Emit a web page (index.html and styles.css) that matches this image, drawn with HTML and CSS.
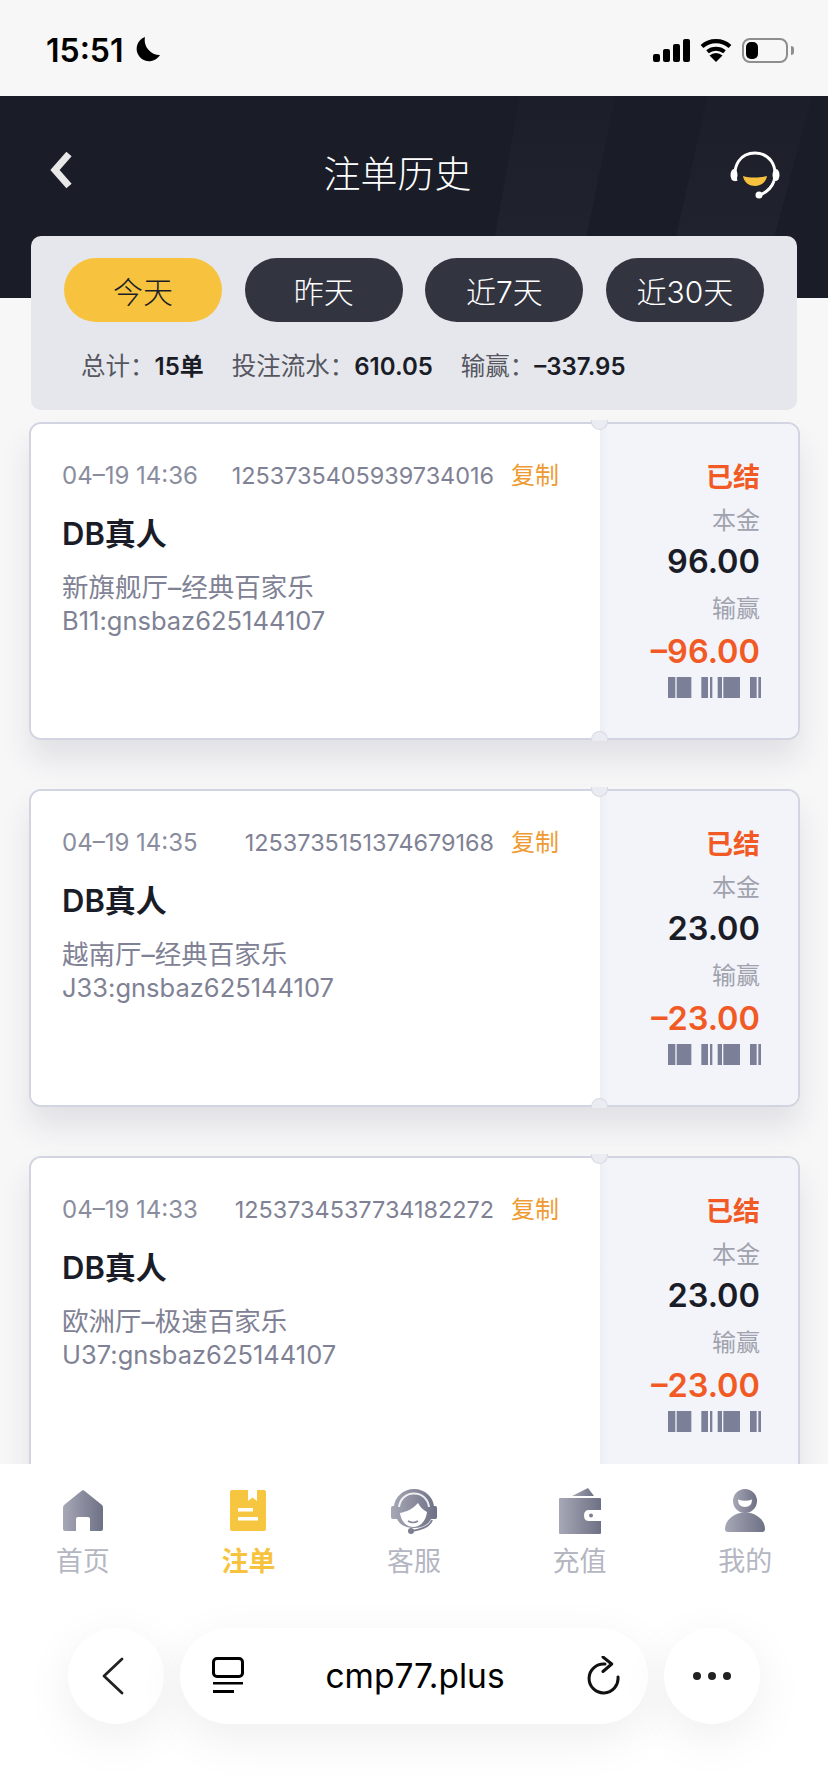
FILE: index.html
```html
<!DOCTYPE html>
<html lang="zh-CN">
<head>
    <meta charset="UTF-8">
    <meta name="viewport" content="width=device-width, initial-scale=1.0">
    <title>注单历史</title>
    <link rel="stylesheet" href="styles.css">
</head>
<body>
    <div class="page">
        <!-- Status bar -->
        <div class="status-bar">
            <div class="status-left">
                <span class="clock">15:51</span>
                <svg class="moon" width="25" height="25" viewBox="0 0 25 25"><path d="M10 0A12.5 12.500 0 1 0 25 18A15 15 0 0 1 10 0Z" fill="#000"/></svg>
            </div>
            <div class="status-right">
                <svg width="37" height="23" viewBox="0 0 37 23"><rect x="0" y="15" width="7" height="8" rx="2"/><rect x="10" y="10" width="7" height="13" rx="2"/><rect x="20" y="5" width="7" height="18" rx="2"/><rect x="30" y="0" width="7" height="23" rx="2"/></svg>
                <svg width="32" height="24" viewBox="0 0 32 24"><path d="M2 8.500A21 21 0 0 1 30 8.500" fill="none" stroke="#000" stroke-width="4.200"/><path d="M7.500 13.800A13.500 13.500 0 0 1 24.500 13.800" fill="none" stroke="#000" stroke-width="4"/><path d="M16 24L9.500 17.500A9.500 9.500 0 0 1 22.500 17.500Z" fill="#000"/></svg>
                <div class="battery"><div class="battery-fill"></div></div>
            </div>
        </div>

        <div class="content">
            <!-- Dark header -->
            <header class="top-bar">
                <svg class="top-stripes" width="828" height="202" viewBox="0 0 828 202">
                    <defs>
                        <linearGradient id="stripeGrad" x1="0" y1="0" x2="0" y2="1">
                            <stop offset="0" stop-color="#1c1f29"/>
                            <stop offset="1" stop-color="#22252f"/>
                        </linearGradient>
                    </defs>
                    <polygon points="520,0 615,0 574,202 484,202" fill="url(#stripeGrad)"/>
                    <polygon points="708,0 812,0 758,202 662,202" fill="url(#stripeGrad)"/>
                </svg>
                <svg class="top-icon" width="24" height="38" viewBox="0 0 24 38"><path d="M19 3L5 19L19 35" fill="none" stroke="#e8e8e8" stroke-width="7"/></svg>
                <h1 class="top-title">注单历史</h1>
                <svg class="top-icon" width="52" height="48" viewBox="0 0 52 48">
                    <path d="M7 30C3 14 12 2 26 2C40 2 49 14 45 30" fill="none" stroke="#fff" stroke-width="3"/>
                    <ellipse cx="5" cy="24" rx="3.500" ry="6" fill="#fff"/>
                    <ellipse cx="47" cy="24" rx="3.500" ry="6" fill="#fff"/>
                    <path d="M45 30C43 36 38 41 31 44" fill="none" stroke="#fff" stroke-width="3"/>
                    <circle cx="30" cy="44" r="3.500" fill="#fff"/>
                    <path d="M14 25C20 27 32 27 38 25C37 32 31 35 26 35C21 35 15 32 14 25Z" fill="#f6c23e"/>
                </svg>
            </header>

            <!-- Date filter -->
            <section class="filter-panel">
                <div class="filter-row">
                    <div class="pill pill-active">今天</div>
                    <div class="pill">昨天</div>
                    <div class="pill">近7天</div>
                    <div class="pill">近30天</div>
                </div>
                <div class="totals">
                    <span>总计：<b>15单</b></span>
                    <span>投注流水：<b>610.05</b></span>
                    <span>输赢：<b>–337.95</b></span>
                </div>
            </section>

            <!-- Bet records -->
            <section class="card-list">
                <article class="card">
                    <div class="card-main">
                        <div class="card-meta">
                            <span class="card-date">04–19 14:36</span>
                            <span class="card-order">1253735405939734016</span>
                            <span class="card-copy">复制</span>
                        </div>
                        <div class="card-name">DB真人</div>
                        <div class="card-game">新旗舰厅–经典百家乐</div>
                        <div class="card-user">B11:gnsbaz625144107</div>
                    </div>
                    <div class="card-side">
                        <div class="side-status">已结</div>
                        <div class="side-label">本金</div>
                        <div class="side-amount">96.00</div>
                        <div class="side-label">输赢</div>
                        <div class="side-result">–96.00</div>
                        <svg class="barcode" width="93" height="21" viewBox="0 0 279 63"><use href="#barcode-bars"/></svg>
                    </div>
                    <i class="notch notch-top"></i>
                    <i class="notch notch-bottom"></i>
                </article>

                <article class="card">
                    <div class="card-main">
                        <div class="card-meta">
                            <span class="card-date">04–19 14:35</span>
                            <span class="card-order">1253735151374679168</span>
                            <span class="card-copy">复制</span>
                        </div>
                        <div class="card-name">DB真人</div>
                        <div class="card-game">越南厅–经典百家乐</div>
                        <div class="card-user">J33:gnsbaz625144107</div>
                    </div>
                    <div class="card-side">
                        <div class="side-status">已结</div>
                        <div class="side-label">本金</div>
                        <div class="side-amount">23.00</div>
                        <div class="side-label">输赢</div>
                        <div class="side-result">–23.00</div>
                        <svg class="barcode" width="93" height="21" viewBox="0 0 279 63"><use href="#barcode-bars"/></svg>
                    </div>
                    <i class="notch notch-top"></i>
                    <i class="notch notch-bottom"></i>
                </article>

                <article class="card">
                    <div class="card-main">
                        <div class="card-meta">
                            <span class="card-date">04–19 14:33</span>
                            <span class="card-order">1253734537734182272</span>
                            <span class="card-copy">复制</span>
                        </div>
                        <div class="card-name">DB真人</div>
                        <div class="card-game">欧洲厅–极速百家乐</div>
                        <div class="card-user">U37:gnsbaz625144107</div>
                    </div>
                    <div class="card-side">
                        <div class="side-status">已结</div>
                        <div class="side-label">本金</div>
                        <div class="side-amount">23.00</div>
                        <div class="side-label">输赢</div>
                        <div class="side-result">–23.00</div>
                        <svg class="barcode" width="93" height="21" viewBox="0 0 279 63"><use href="#barcode-bars"/></svg>
                    </div>
                    <i class="notch notch-top"></i>
                    <i class="notch notch-bottom"></i>
                </article>
            </section>
        </div>

        <!-- Tab bar -->
        <nav class="tab-bar">
            <div class="tab">
                <svg width="40" height="42" viewBox="0 0 40 42"><path d="M19 0.500Q20 0 21 0.500L39 15Q40 16 40 18V39Q40 41 38 41H27V29Q27 27 25 27H15Q13 27 13 29V41H2Q0 41 0 39V18Q0 16 1 15Z" fill="url(#tabGrad)"/></svg>
                <span>首页</span>
            </div>
            <div class="tab tab-active">
                <svg width="36" height="42" viewBox="0 0 36 42"><path d="M2 0H18V11L22.500 7.500L27 11V0H34Q36 0 36 2V39Q36 41 34 41H2Q0 41 0 39V2Q0 0 2 0Z" fill="#f6c641"/><rect x="8" y="18" width="15" height="3.500" fill="#fff"/><rect x="8" y="27" width="20" height="3.500" fill="#fff"/></svg>
                <span>注单</span>
            </div>
            <div class="tab">
                <svg width="46" height="46" viewBox="0 0 46 46">
                    <path d="M23 1C12 1 4 9 3 18H1.500Q0 18 0 20V29Q0 31 1.500 31H6C9 37 15 40 23 40C31 40 37 37 40 31H44.500Q46 31 46 29V20Q46 18 44.500 18H43C42 9 34 1 23 1Z" fill="url(#tabGrad)"/>
                    <path d="M8 19C9 11 15 5.500 23 5.500C31 5.500 37 11 38 19" fill="none" stroke="#fff" stroke-width="2" opacity="0.85"/>
                    <path d="M9 25C15 24 22 21 27 15C29 19 32 22 36 24C35 33 29 39 22.500 39C15 39 10 33 9 25Z" fill="#fff"/>
                    <path d="M17 33Q22 36 27 33" fill="none" stroke="#85879b" stroke-width="1.500"/>
                    <path d="M41 32C39 38 30 41.500 21 43" fill="none" stroke="#7c7e92" stroke-width="2"/>
                    <circle cx="20" cy="43" r="3" fill="#7c7e92"/>
                </svg>
                <span>客服</span>
            </div>
            <div class="tab">
                <svg width="42" height="46" viewBox="0 0 42 46"><polygon points="13,8 29,0 35,8" fill="url(#tabGrad)"/><path d="M1 10H41Q42 10 42 11V22H30Q25 22 25 27.500Q25 33 30 33H42V45Q42 46 41 46H1Q0 46 0 45V11Q0 10 1 10Z" fill="url(#tabGrad)"/><circle cx="32" cy="27.500" r="2" fill="#7c7e92"/></svg>
                <span>充值</span>
            </div>
            <div class="tab">
                <svg width="42" height="44" viewBox="0 0 42 44"><path d="M21 0A12 12 0 1 1 21 24A12 12 0 1 1 21 0ZM14 10.500Q21 13 28 10.500Q28 18 21 18Q14 18 14 10.500Z" fill="url(#tabGrad)" fill-rule="evenodd"/><path d="M21 23.500C32 23.500 41 31 41 40Q41 43 38 43H4Q1 43 1 40C1 31 10 23.500 21 23.500Z" fill="url(#tabGrad)"/></svg>
                <span>我的</span>
            </div>
        </nav>

        <!-- Browser toolbar -->
        <div class="browser-bar">
            <div class="browser-btn">
                <svg class="browser-back" width="24" height="38" viewBox="0 0 24 38"><path d="M18 2L0 19L18 36" fill="none" stroke="#222" stroke-width="2.800" stroke-linecap="round" stroke-linejoin="round"/></svg>
            </div>
            <div class="browser-url">
                <svg width="32" height="38" viewBox="0 0 32 38"><rect x="1.500" y="1.500" width="29" height="18" rx="3.500" fill="none" stroke="#000" stroke-width="3"/><rect x="1" y="25" width="30" height="2.500" fill="#000"/><rect x="1" y="33" width="21" height="3" fill="#000"/></svg>
                <span class="browser-domain">cmp77.plus</span>
                <svg width="34" height="40" viewBox="16 16 34 40"><path d="M35 24A14.500 14.500 0 1 0 48 37" fill="none" stroke="#111" stroke-width="3" stroke-linecap="round"/><path d="M33 17L41.700 24L33 31.500" fill="none" stroke="#111" stroke-width="3" stroke-linecap="round" stroke-linejoin="round"/></svg>
            </div>
            <div class="browser-btn browser-more"><i></i><i></i><i></i></div>
        </div>
    </div>

    <!-- Shared SVG bits -->
    <svg class="svg-defs" width="0" height="0">
        <defs>
            <linearGradient id="tabGrad" x1="0" y1="0" x2="1" y2="0">
                <stop offset="0" stop-color="#a6a8b6"/>
                <stop offset="1" stop-color="#6e7085"/>
            </linearGradient>
            <g id="barcode-bars" fill="#7c7f98">
                <rect x="0" width="22" height="63"/>
                <rect x="26" width="44" height="63"/>
                <rect x="100" width="20" height="63"/>
                <rect x="126" width="7" height="63"/>
                <rect x="149" width="13" height="63"/>
                <rect x="166" width="50" height="63"/>
                <rect x="246" width="20" height="63"/>
                <rect x="271" width="8" height="63"/>
            </g>
        </defs>
    </svg>
</body>
</html>
```

FILE: styles.css
```css
* {
    box-sizing: border-box;
}

body {
    margin: 0;
    background-color: #fff;
    font-family: Inter, "Noto Sans CJK SC", sans-serif;
}

.page {
    width: 828px;
    height: 1792px;
    display: flex;
    flex-direction: column;
    overflow: hidden;
    position: relative;
}

.svg-defs {
    position: absolute;
}

/* Status bar */
.status-bar {
    height: 96px;
    flex: none;
    background-color: #f7f7f7;
    display: flex;
    justify-content: space-between;
    align-items: center;
    padding: 4px 40px 0 46px;
}

.status-left {
    display: flex;
    align-items: center;
    gap: 11px;
}

.clock {
    font-size: 32px;
    font-weight: 600;
    color: #000;
}

.moon {
    margin-top: -2px;
}

.status-right {
    display: flex;
    align-items: center;
    gap: 10px;
}

.battery {
    width: 46px;
    height: 25px;
    border: 2px solid #8e8e8e;
    border-radius: 8px;
    padding: 2px;
    position: relative;
}

.battery::after {
    content: "";
    position: absolute;
    right: -8px;
    top: 6px;
    width: 3px;
    height: 9px;
    border-radius: 0 3px 3px 0;
    background-color: #8e8e8e;
}

.battery-fill {
    width: 12px;
    height: 17px;
    background-color: #000;
    border-radius: 5px;
}

/* Page content */
.content {
    height: 1368px;
    flex: none;
    overflow: hidden;
    background-color: #f7f7f8;
}

.top-bar {
    height: 202px;
    background-color: #1a1d27;
    display: flex;
    justify-content: space-between;
    align-items: flex-start;
    padding: 55px 47px 0 50px;
    position: relative;
}

.top-stripes {
    position: absolute;
    left: 0;
    top: 0;
}

.top-icon {
    position: relative;
    flex: none;
}

.top-title {
    margin: 3px 0 0 -8px;
    font-size: 37px;
    line-height: 42px;
    font-weight: 300;
    color: #fff;
    position: relative;
}

/* Filter panel */
.filter-panel {
    width: 766px;
    height: 174px;
    margin: -62px 0 0 31px;
    padding: 22px 33px 0;
    background-color: #e6e7ec;
    border-radius: 10px;
    position: relative;
}

.filter-row {
    display: flex;
    justify-content: space-between;
}

.pill {
    width: 158px;
    height: 64px;
    border-radius: 32px;
    background-color: #32343f;
    color: #fff;
    font-size: 30px;
    font-weight: 300;
    display: flex;
    align-items: center;
    justify-content: center;
}

.pill-active {
    background-color: #f7c33f;
    color: #1a1d27;
}

.totals {
    display: flex;
    gap: 28px;
    margin-top: 26px;
    padding-left: 17px;
    font-size: 24.5px;
    line-height: 36px;
    color: #55565f;
}

.totals b {
    font-size: 24px;
    font-weight: 600;
    color: #1a1d27;
}

/* Cards */
.card-list {
    display: flex;
    flex-direction: column;
    gap: 49px;
    margin-top: 12px;
    padding: 0 28px 0 29px;
}

.card {
    height: 318px;
    flex: none;
    display: flex;
    position: relative;
    border: 2px solid #d3d4e2;
    border-radius: 12px;
    background-color: #fff;
    box-shadow: 0 20px 30px rgba(40, 44, 70, 0.1);
}

.card-main {
    width: 569px;
    flex: none;
    padding: 36px 0 0 31px;
    background-color: #fff;
    border-radius: 10px 0 0 10px;
}

.card-meta {
    display: flex;
    align-items: center;
    width: 497px;
    font-size: 23.4px;
    line-height: 32px;
    color: #8a8d9d;
}

.card-date {
    font-size: 24px;
}

.card-order {
    margin-left: auto;
    color: #7f8294;
}

.card-copy {
    margin-left: 17px;
    font-size: 24px;
    color: #ee9b33;
}

.card-name {
    margin-top: 22px;
    font-size: 31px;
    line-height: 40px;
    font-weight: 600;
    color: #1a1d27;
}

.card-game,
.card-user {
    line-height: 34px;
    color: #7f8294;
}

.card-game {
    margin-top: 16px;
    font-size: 26.5px;
}

.card-user {
    font-size: 25.5px;
}

.card-side {
    flex: 1;
    padding: 34px 38px 0 0;
    display: flex;
    flex-direction: column;
    align-items: flex-end;
    background: linear-gradient(to right, #eceef4, #f3f4f9 8px);
    border-radius: 0 10px 10px 0;
}

.side-status {
    font-size: 27px;
    line-height: 40px;
    font-weight: 600;
    color: #f15a24;
}

.side-label {
    margin-top: 6px;
    font-size: 24px;
    line-height: 34px;
    color: #a0a2ae;
}

.side-amount,
.side-result {
    font-size: 32.5px;
    line-height: 44px;
    font-weight: 600;
    color: #1a1d27;
}

.side-amount {
    margin: 2px 0;
}

.side-result {
    margin-top: 4px;
    color: #f15a24;
}

.barcode {
    margin: 3px -1px 0 0;
}

.notch {
    position: absolute;
    left: 560px;
    width: 17px;
    height: 10px;
    background-color: #ebecf1;
    border: 1px solid #d8d9e5;
}

.notch-top {
    top: -4px;
    border-top: none;
    border-radius: 0 0 9px 9px;
}

.notch-bottom {
    bottom: -3px;
    border-bottom: none;
    border-radius: 9px 9px 0 0;
}

/* Tab bar */
.tab-bar {
    height: 136px;
    flex: none;
    display: flex;
    align-items: flex-start;
    padding-top: 24px;
    background-color: #fff;
    position: relative;
}

.tab {
    flex: 1;
    display: flex;
    flex-direction: column;
    align-items: center;
    gap: 12px;
    font-size: 27px;
    line-height: 32px;
    color: #b4b6c2;
}

.tab svg {
    height: 46px;
    flex: none;
}

.tab-active {
    color: #f7c33f;
    font-weight: 700;
}

/* Browser toolbar */
.browser-bar {
    flex: 1;
    display: flex;
    gap: 16px;
    padding: 28px 68px 0;
    background-color: #fff;
}

.browser-btn,
.browser-url {
    height: 96px;
    background-color: #fff;
    border-radius: 48px;
    box-shadow: 0 14px 50px rgba(0, 0, 0, 0.07);
    display: flex;
    align-items: center;
}

.browser-btn {
    width: 96px;
    justify-content: center;
}

.browser-back {
    overflow: visible;
}

.browser-url {
    width: 468px;
    justify-content: space-between;
    padding: 0 28px 0 32px;
}

.browser-domain {
    font-size: 33.5px;
    font-weight: 400;
    color: #000;
}

.browser-more {
    gap: 7px;
}

.browser-more i {
    width: 8px;
    height: 8px;
    border-radius: 50%;
    background-color: #222;
}
```
